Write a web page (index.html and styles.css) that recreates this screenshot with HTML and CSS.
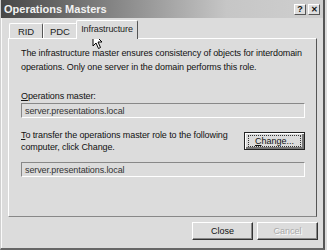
FILE: index.html
```html
<!DOCTYPE html>
<html lang="en">
<head>
    <meta charset="UTF-8">
    <title>Operations Masters</title>
    <link rel="stylesheet" href="styles.css">
</head>
<body>

    <div class="window">
        <div class="titlebar">
            <span class="title">Operations Masters</span>
            <div class="title-buttons">
                <span class="tbtn">?</span>
                <span class="tbtn tbtn-close">&#x2715;</span>
            </div>
        </div>

        <div class="tabs">
            <div class="tab">RID</div>
            <div class="tab">PDC</div>
            <div class="tab tab-active">Infrastructure</div>
        </div>

        <div class="panel">
            <p class="desc">The infrastructure master ensures consistency of objects for interdomain operations. Only one server in the domain performs this role.</p>

            <label class="field-label key">Operations master:</label>
            <div class="field">server.presentations.local</div>

            <div class="transfer">
                <p class="transfer-text key">To transfer the operations master role to the following computer, click Change.</p>
                <button class="btn btn-focus"><span class="focus-ring key">Change...</span></button>
            </div>
            <div class="field">server.presentations.local</div>
        </div>

        <div class="footer">
            <button class="btn">Close</button>
            <button class="btn btn-disabled">Cancel</button>
        </div>

        <!-- mouse pointer sitting over the Infrastructure tab -->
        <svg class="cursor" width="12" height="18" viewBox="0 0 12 18">
            <path d="M1 1 L1 14 L4 11 L6.5 16.5 L8.5 15.5 L6 10 L10 10 Z" fill="#fff" stroke="#000" stroke-width="1"/>
        </svg>
    </div>

</body>
</html>
```

FILE: styles.css
```css
body {
    margin: 0;
    padding: 0;
    background-color: #dcdcdc;
    font-family: "Liberation Sans", Arial, sans-serif;
    font-size: 9px;
    letter-spacing: -0.1px;
    color: #111;
}
/* access key: underline the first letter */
.key::first-letter {
    text-decoration: underline;
}
.window {
    position: relative;
    width: 325px;
    height: 250px;
    box-sizing: border-box;
    background-color: #dcdcdc;
    border-left: 1px solid #d0d0d0;
    border-right: 2px solid #555;
    border-bottom: 2px solid #666;
    box-shadow: inset 1px 0 0 #fafafa;
    display: flex;
    flex-direction: column;
}
.titlebar {
    height: 18px;
    display: flex;
    align-items: center;
    justify-content: space-between;
    padding: 0 3px 0 3px;
    background: linear-gradient(to right, #474747 0%, #858585 35%, #c6c6c6 70%, #cfcfcf 100%);
}
.title {
    color: #f2f2f2;
    font-weight: bold;
    font-size: 11px;
    letter-spacing: 0;
}
.title-buttons {
    display: flex;
    gap: 2px;
}
.tbtn {
    width: 12px;
    height: 11px;
    box-sizing: border-box;
    background-color: #dedede;
    border: 1px solid;
    border-color: #fff #555 #555 #fff;
    font-size: 9px;
    font-weight: bold;
    line-height: 9px;
    text-align: center;
    color: #111;
}
.tbtn-close {
    font-size: 8px;
}
.tabs {
    display: flex;
    align-items: flex-end;
    margin: 3px 0 0 8px;
    height: 17px;
}
.tab {
    height: 15px;
    box-sizing: border-box;
    padding: 2px 0 0;
    text-align: center;
    border: 1px solid;
    border-color: #fff #555 transparent #fff;
    border-bottom: 0;
    border-radius: 2px 2px 0 0;
    color: #222;
    font-size: 9.5px;
}
.tab:first-child {
    width: 34px;
}
.tab:nth-child(2) {
    width: 34px;
}
.tab-active {
    height: 19px;
    width: 62px;
    margin-left: -1px;
    padding-top: 3px;
    background-color: #dcdcdc;
    position: relative;
    z-index: 1;
    margin-bottom: -1px;
    font-size: 9px;
}
.panel {
    margin: 0 6px 0 7px;
    height: 179px;
    box-sizing: border-box;
    border: 1px solid;
    border-color: #fff #555 #888 #fff;
    padding: 7px 11px 0 12px;
}
.desc {
    margin: 0 0 16px;
    line-height: 14px;
}
.field-label {
    display: block;
    line-height: 12px;
    margin-bottom: 1px;
}
.field {
    height: 15px;
    box-sizing: border-box;
    border: 1px solid;
    border-color: #888 #fff #fff #888;
    box-shadow: inset 1px 1px 0 #dcdcdc;
    padding: 1px 3px;
    line-height: 12px;
    color: #333;
}
.transfer {
    display: flex;
    justify-content: space-between;
    align-items: flex-start;
    margin-top: 11px;
    margin-bottom: 9px;
}
.transfer-text {
    margin: 0;
    width: 215px;
    line-height: 12px;
}
.btn {
    width: 61px;
    height: 18px;
    box-sizing: border-box;
    background-color: #dcdcdc;
    border: 1px solid;
    border-color: #fff #333 #333 #fff;
    box-shadow: inset -1px -1px 0 #888;
    font-family: "Liberation Sans", Arial, sans-serif;
    font-size: 9px;
    color: #111;
    padding: 0;
}
.btn-focus {
    margin-top: 3px;
    border-color: #222;
    box-shadow: inset 1px 1px 0 #fff, inset -2px -2px 0 #777;
}
.focus-ring {
    display: block;
    margin: 2px 3px;
    border: 1px dotted #333;
    line-height: 10px;
}
.footer {
    display: flex;
    justify-content: flex-end;
    gap: 4px;
    padding: 5px 5px 0 0;
}
.btn-disabled {
    color: #aaa;
    text-shadow: 1px 1px 0 #fff;
}
.cursor {
    position: absolute;
    left: 91px;
    top: 32px;
}
```
